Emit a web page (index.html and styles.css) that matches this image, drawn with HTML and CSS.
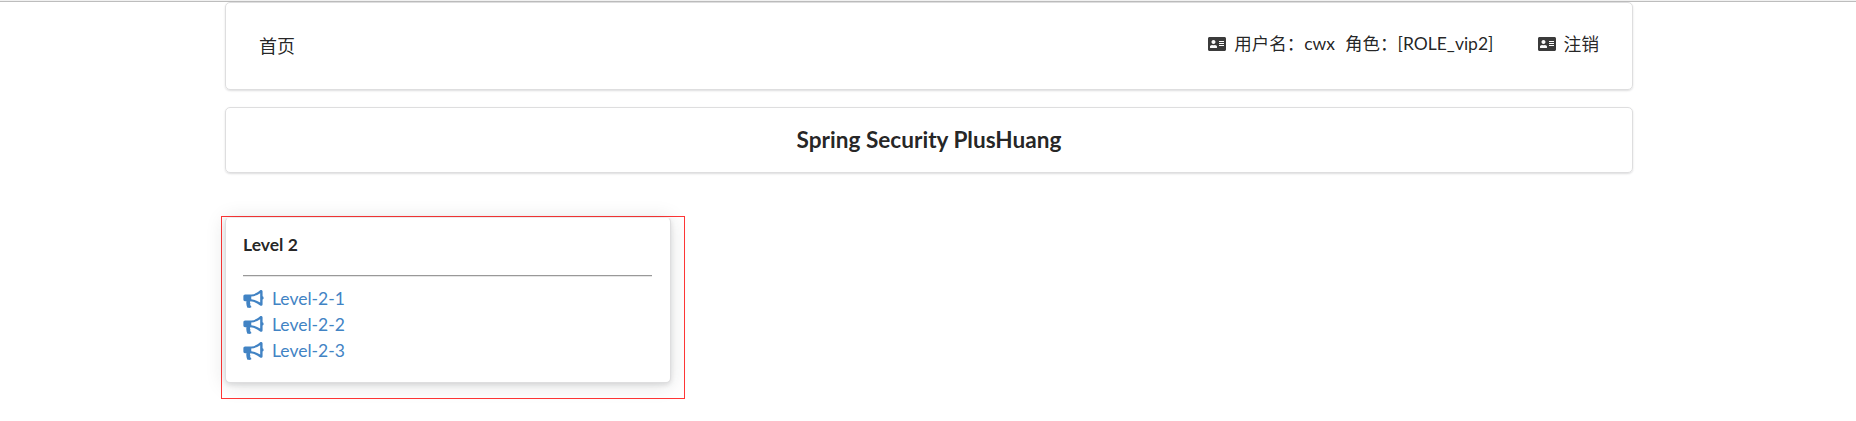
FILE: index.html
```html
<!DOCTYPE html>
<html lang="zh">
<head>
<meta charset="utf-8">
<title>首页</title>
<link rel="stylesheet" href="styles.css">
</head>
<body>
<svg class="defs" aria-hidden="true">
  <symbol id="card" viewBox="0 32 576 448"><path d="M528 32H48C21.500 32 0 53.500 0 80v352c0 26.500 21.500 48 48 48h480c26.500 0 48-21.500 48-48V80c0-26.500-21.500-48-48-48zm-352 96c35.300 0 64 28.700 64 64s-28.700 64-64 64-64-28.700-64-64 28.700-64 64-64zm112 236.800c0 10.600-10 19.200-22.400 19.200H86.400C74 384 64 375.400 64 364.800v-19.200c0-31.800 30.100-57.600 67.200-57.600h5c12.300 5.100 25.700 8 39.800 8s27.600-2.900 39.800-8h5c37.100 0 67.200 25.800 67.200 57.600v19.200zM512 312c0 4.400-3.600 8-8 8H360c-4.400 0-8-3.600-8-8v-16c0-4.400 3.600-8 8-8h144c4.400 0 8 3.600 8 8v16zm0-64c0 4.400-3.600 8-8 8H360c-4.400 0-8-3.600-8-8v-16c0-4.400 3.600-8 8-8h144c4.400 0 8 3.600 8 8v16zm0-64c0 4.400-3.600 8-8 8H360c-4.400 0-8-3.600-8-8v-16c0-4.400 3.600-8 8-8h144c4.400 0 8 3.600 8 8v16z"/></symbol>
  <symbol id="horn" viewBox="0 0 576 512"><path fill-rule="evenodd" d="M576 224c0-20-12-36-30-43V44c0-30-20-44-44-44-10 0-18 4-25 10C400 76 320 126 230 128H48c-27 0-48 21-48 48v96c0 27 21 48 48 48h40c-14 64 2 118 20 168 4 12 12 18 24 20 30 6 62 4 84-8 16-10 14-28 2-38-22-22-32-42-20-68 4-8 4-12-2-18-12-18-10-36 6-54 100 4 190 52 275 118 7 6 15 9 25 9 24 0 44-16 44-44V268c18-7 30-24 30-44zM478 356C400 306 320 270 224 260v-72c96-10 176-46 254-98z"/></symbol>
</svg>
<div class="topline"></div>
<main class="container">
  <nav class="segment nav">
    <a class="home">首页</a>
    <div class="menu">
      <a class="item"><svg class="card-icon"><use href="#card"/></svg><span>用户名：cwx</span><span class="role">角色：[ROLE_vip2]</span></a>
      <a class="item logout"><svg class="card-icon"><use href="#card"/></svg><span>注销</span></a>
    </div>
  </nav>
  <header class="segment banner"><h3>Spring Security PlusHuang</h3></header>
  <section class="frame">
    <div class="level">
      <h5>Level 2</h5>
      <hr>
      <a class="link"><svg class="horn-icon"><use href="#horn"/></svg>Level-2-1</a>
      <a class="link"><svg class="horn-icon"><use href="#horn"/></svg>Level-2-2</a>
      <a class="link"><svg class="horn-icon"><use href="#horn"/></svg>Level-2-3</a>
    </div>
  </section>
</main>
</body>
</html>
```

FILE: styles.css
```css
* { box-sizing: border-box; }
body { margin: 0; height: 421px; overflow: hidden; background: #fff; color: rgba(0,0,0,.87); font: 17.5px/26px Lato, "Noto Sans CJK SC", sans-serif; }
.defs { position: absolute; width: 0; height: 0; }
.topline { height: 2px; background: #f1f1f1; border-bottom: 1px solid #bdbdbd; }
.container { width: 1408px; margin-left: 225px; }
.segment { border: 1px solid #dededf; border-radius: 5px; box-shadow: 0 1px 2px rgba(34,36,38,.15); }
.nav { height: 88px; display: flex; justify-content: space-between; padding: 28px 33px 0 33px; }
.home { padding-top: 2px; font-size: 18px; }
.menu { display: flex; gap: 45px; }
.item { display: flex; height: 26px; align-items: center; }
.item span { white-space: nowrap; }
.card-icon { width: 18px; height: 14px; margin-right: 8px; fill: #3b3b3b; }
.role { margin-left: 10px; }
.logout span { font-size: 17.8px; }
.logout .card-icon { margin-right: 7px; }
.banner { height: 66px; margin-top: 17px; display: flex; align-items: center; justify-content: center; }
.banner h3 { margin: 0; font-size: 22.6px; line-height: 28px; font-weight: 700; }
.frame { width: 464px; height: 183px; margin: 43px 0 0 -4px; border: 1px solid #ff3636; padding: 0 0 0 3px; }
.level { width: 446px; height: 166px; padding: 16px 18px 16px 17px; border: 1px solid #dededf; border-top-color: transparent; border-radius: 5px; background: #fff; background-clip: padding-box; box-shadow: 0 2px 5px rgba(34,36,38,.12), 0 2px 20px rgba(34,36,38,.13); }
.level h5 { margin: 0; font-size: 17.5px; line-height: 22px; font-weight: 700; }
.level hr { height: 2px; margin: 19px 0 9px; border: 0; border-top: 1px solid #999; background: #e6e6e6; }
.link { display: flex; align-items: center; height: 26px; color: #4183c4; }
.horn-icon { width: 21px; height: 18px; margin-right: 8px; fill: currentColor; }
```
